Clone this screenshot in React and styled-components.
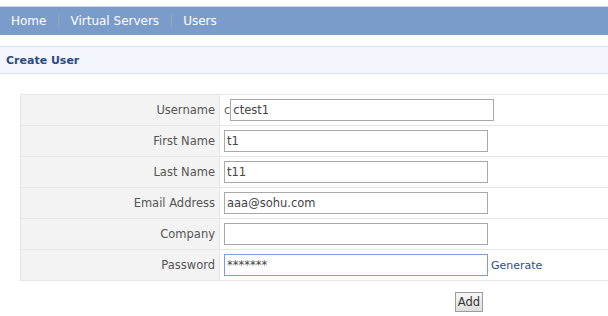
import React from "react";
import styled, { createGlobalStyle } from "styled-components";

const Global = createGlobalStyle`
  html, body { margin: 0; padding: 0; background: #fff; overflow: hidden; }
  body { font-family: "DejaVu Sans", Verdana, sans-serif; font-size: 11px; color: #555; }
`;

const Page = styled.div`
  padding-top: 6px;
  width: 608px;
  overflow: hidden;
`;

const NavBar = styled.nav`
  display: flex;
  align-items: center;
  height: 28px;
  border-top: 1px solid #c9d4e5;
  background: #7b9bcb;
  padding-left: 11px;
`;

const NavLink = styled.a`
  color: #fff;
  font-size: 12px;
  text-decoration: none;
`;

const NavSep = styled.span`
  color: #9aa9bd;
  font-size: 12px;
  margin: 0 10px;
`;

const SectionHead = styled.h2`
  margin: 11px 0 0;
  height: 26px;
  display: flex;
  align-items: center;
  padding-left: 6px;
  border-top: 1px solid #d9e3ef;
  border-bottom: 1px solid #d9e3ef;
  background: #f2f6fc;
  font-size: 11px;
  font-weight: bold;
  color: #2b4a7e;
`;

const Form = styled.form`
  margin: 20px 0 0 20px;
  width: 698px;
`;

const Table = styled.table`
  border-collapse: collapse;
  width: 100%;
  table-layout: fixed;
`;

const LabelCell = styled.th`
  width: 189px;
  background: #f3f3f3;
  border: 1px solid #e6e6e6;
  text-align: right;
  font-weight: normal;
  font-size: 11.5px;
  color: #555;
  padding: 0 4px 0 5px;
  height: 30px;
`;

const ValueCell = styled.td`
  border-top: 1px solid #e6e6e6;
  border-bottom: 1px solid #e6e6e6;
  padding: 0 0 0 4px;
  height: 30px;
  color: #555;
  white-space: nowrap;
`;

const Field = styled.input`
  box-sizing: border-box;
  width: 264px;
  height: 22px;
  margin: 0;
  padding: 0 2px;
  border: 1px solid ${(p) => (p.$focused ? "#7b9cd8" : "#a9a9a9")};
  font-family: "DejaVu Sans", Verdana, sans-serif;
  font-size: 11.5px;
  color: #444;
  vertical-align: middle;
  outline: none;
  background: #fff;
`;

const Prefix = styled.span`
  vertical-align: middle;
  font-size: 11.5px;
  color: #666;
`;

const GenLink = styled.a`
  color: #2f4b86;
  margin-left: 3px;
  vertical-align: middle;
  text-decoration: none;
  cursor: pointer;
`;

const ButtonRow = styled.div`
  display: grid;
  grid-template-columns: 200px 1fr;
  margin-top: 11px;
`;

const ButtonCell = styled.div`
  grid-column: 2;
  display: flex;
  justify-content: center;
`;

const AddButton = styled.button`
  box-sizing: border-box;
  height: 20px;
  width: 28px;
  padding: 0;
  border: 1px solid #9c9c9c;
  background: linear-gradient(#f6f6f6, #dedede);
  font-family: "DejaVu Sans", Verdana, sans-serif;
  font-size: 11.5px;
  color: #333;
`;

const rows = [
  { label: "Username", value: "ctest1", prefix: "c" },
  { label: "First Name", value: "t1" },
  { label: "Last Name", value: "t11" },
  { label: "Email Address", value: "aaa@sohu.com" },
  { label: "Company", value: "" },
  { label: "Password", value: "*******", password: true },
];

export default function App() {
  return (
    <>
      <Global />
      <Page>
        <NavBar>
          <NavLink>Home</NavLink>
          <NavSep>|</NavSep>
          <NavLink>Virtual Servers</NavLink>
          <NavSep>|</NavSep>
          <NavLink>Users</NavLink>
        </NavBar>
        <SectionHead>Create User</SectionHead>
        <Form onSubmit={(e) => e.preventDefault()}>
          <Table>
            <tbody>
              {rows.map((r) => (
                <tr key={r.label}>
                  <LabelCell>{r.label}</LabelCell>
                  <ValueCell>
                    {r.prefix && <Prefix>{r.prefix}</Prefix>}
                    <Field
                      type="text"
                      defaultValue={r.value}
                      $focused={r.password}
                      readOnly
                    />
                    {r.password && <GenLink>Generate</GenLink>}
                  </ValueCell>
                </tr>
              ))}
            </tbody>
          </Table>
          <ButtonRow>
            <ButtonCell>
              <AddButton type="button">Add</AddButton>
            </ButtonCell>
          </ButtonRow>
        </Form>
      </Page>
    </>
  );
}
